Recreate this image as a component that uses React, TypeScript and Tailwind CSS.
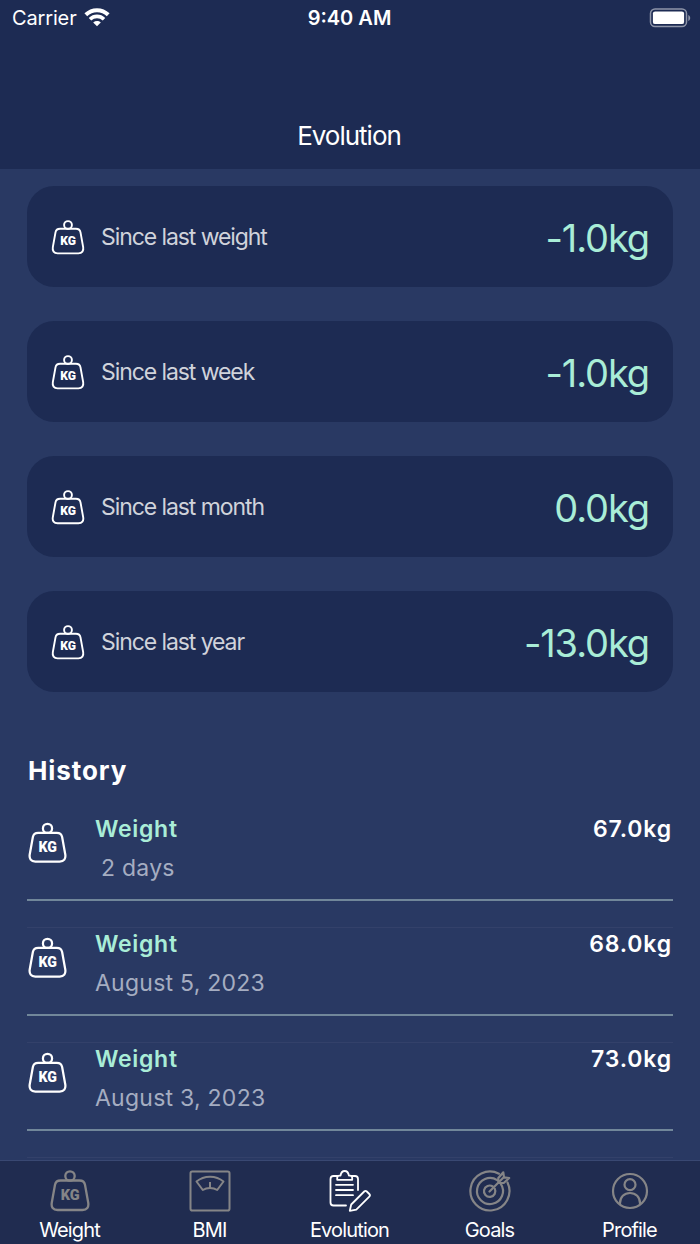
import type { ReactNode } from "react";
import { clsx } from "clsx";

const changes = [
  { label: "Since last weight", value: "-1.0kg" },
  { label: "Since last week", value: "-1.0kg" },
  { label: "Since last month", value: "0.0kg" },
  { label: "Since last year", value: "-13.0kg" },
];

const history = [
  { value: "67.0kg", date: "2 days", recent: true },
  { value: "68.0kg", date: "August 5, 2023" },
  { value: "73.0kg", date: "August 3, 2023" },
];

function WeightIcon({ className }: { className?: string }) {
  return (
    <svg viewBox="0 0 40 42" fill="none" stroke="currentColor" strokeWidth="2.3" className={className} aria-hidden="true">
      <circle cx="20" cy="6" r="4.7" />
      <path d="M10.5 10.5h19c3.2 0 5 1.5 5.5 4.3l3.2 17.7c.8 4.7-1.3 7.5-5.7 7.5h-25c-4.4 0-6.5-2.8-5.700-7.500L5 14.800c.5-2.800 2.300-4.300 5.500-4.300Z" />
      <text
        x="10.7"
        y="29.8"
        stroke="none"
        fill="currentColor"
        className="font-['Roboto'] text-[14.5px] font-black"
        textLength="19"
        lengthAdjust="spacing"
      >
        KG
      </text>
    </svg>
  );
}

function ScaleIcon() {
  return (
    <svg viewBox="0 0 42 42" fill="none" stroke="currentColor" strokeWidth="2" strokeLinejoin="round" className="size-[42px]">
      <rect x="1.5" y="1.5" width="39" height="39" rx="1.8" />
      <path d="M7.5 11.5c7.5-6.5 19.5-6.500 27 0l-6.300 8.500c-4.200-2.700-10.200-2.700-14.400 0Z" />
      <path d="M21 18v-6" />
    </svg>
  );
}

function ClipboardIcon() {
  return (
    <svg viewBox="0 0 42 42" fill="none" stroke="currentColor" strokeWidth="1.8" strokeLinejoin="round" strokeLinecap="round" className="size-[42px]">
      <path d="M8.500 6H4.500c-2 0-3 1-3 3v23.500c0 2 1 3 3 3H17" />
      <path d="M22.500 6h3.500c2 0 3 1 3 3v11" />
      <path d="M8.200 9.800V8c0-1.500.8-2.300 2.300-2.300h1c.5-3 2.100-4.700 4.200-4.700s3.700 1.700 4.200 4.700h1c1.500 0 2.300.8 2.300 2.300v1.800Z" />
      <path d="M7 14.800h17M7 20h17M7 25.200h17" />
      <path d="m20.800 40.800 1.400-6.300 13-13c.8-.8 1.800-.8 2.600 0l2.500 2.500c.8.800.8 1.800 0 2.600l-13 13Z" />
    </svg>
  );
}

function TargetIcon() {
  return (
    <svg viewBox="0 0 42 42" fill="none" stroke="currentColor" strokeWidth="2.2" strokeLinejoin="round" strokeLinecap="round" className="size-[42px]">
      <path d="M30 3.700A19.500 19.500 0 1 0 38.500 12.500" />
      <path d="M28.200 10.200A13 13 0 1 0 31.800 13.800" />
      <path d="M23.800 16.500A5.700 5.700 0 1 0 25.700 18.600" />
      <path d="M20.500 21.500 34 8M29.300 12.700V8l5-5.700.7 5 5.200.7-5.500 5h-5.400" />
    </svg>
  );
}

function ProfileIcon() {
  return (
    <svg viewBox="0 0 42 42" fill="none" stroke="currentColor" strokeWidth="2.2" className="size-[42px]">
      <circle cx="21" cy="21" r="17" />
      <circle cx="21" cy="14.7" r="5.5" />
      <path d="M11 34.700v-1.500c0-6 4.200-10.200 10-10.200s10 4.200 10 10.200v1.500" />
    </svg>
  );
}

function StatusBar() {
  return (
    <div className="grid h-9 grid-cols-3 items-center pl-3 pr-[9px] text-[20px] leading-none">
      <div className="flex items-center gap-[7px]">
        <span className="tracking-[-0.15px]">Carrier</span>
        <svg viewBox="0 0 26 20" className="-mt-[2px] h-5 w-[26px]" fill="none" stroke="currentColor" strokeWidth="4">
          <path d="M1.800 7.700c6.300-6.100 16.100-6.100 22.400 0" />
          <path d="M6 12.200c4-3.800 10-3.800 14 0" strokeWidth="3.6" />
          <path d="m13 19.200-3.800-3.700c2.300-1.900 5.300-1.900 7.600 0Z" fill="currentColor" stroke="none" />
        </svg>
      </div>
      <span className="-ml-[4px] text-center font-semibold">9:40 AM</span>
      <svg viewBox="0 0 42 20" className="-mt-px h-5 w-[42px] justify-self-end" fill="none">
        <rect x="1.5" y="1" width="36" height="17.5" rx="4.5" stroke="#8e95a9" strokeWidth="1.5" />
        <rect x="3.9" y="3.4" width="31.2" height="12.7" rx="2.2" fill="white" />
        <path d="M39.300 7c2.500 1 2.500 5 0 6Z" fill="#8e95a9" />
      </svg>
    </div>
  );
}

function ChangeCard({ label, value }: { label: string; value: string }) {
  return (
    <article className="flex h-[101px] items-center rounded-[27px] bg-[#1d2b53] px-6">
      <WeightIcon className="mt-px h-[35px] w-[34px] shrink-0" />
      <span className="ml-[16px] flex-1 pt-[2px] text-[23px] tracking-[-1.08px] text-[#d0d3db]">{label}</span>
      <span className="pt-[2px] text-[38px] leading-none tracking-[-1.1px] text-[#a9edd7]">{value}</span>
    </article>
  );
}

function HistoryRow({ value, date, recent }: { value: string; date: string; recent?: boolean }) {
  return (
    <li className="h-[115px]">
      <div className="flex h-[88px] border-b-2 border-[#71879a]">
        <WeightIcon className="mt-[9px] ml-px h-[42px] w-[39px] shrink-0" />
        <div className="ml-[28px] flex-1">
          <p className="text-[23px] leading-8 font-semibold tracking-[0.7px] text-[#a9edd7]">Weight</p>
          <p className={clsx("mt-[7px] text-[23px] leading-8 tracking-[0.25px] text-[#a5adc1]", recent && "pl-[6px]")}>{date}</p>
        </div>
        <span className="pr-px text-[23px] leading-8 font-semibold tracking-[0.85px]">{value}</span>
      </div>
      <div className="h-[27px] border-b border-[#33416a]" />
    </li>
  );
}

function Tab({ label, active, children }: { label: string; active?: boolean; children: ReactNode }) {
  return (
    <button className="-ml-px flex flex-col items-center">
      <span className={clsx("flex h-[42px] items-end", active ? "text-white" : "text-[#858587]")}>{children}</span>
      <span className="mt-[5px] text-[20px] leading-[26px] tracking-[-0.85px]">{label}</span>
    </button>
  );
}

export default function App() {
  return (
    <div className="flex h-[1244px] w-[700px] flex-col overflow-hidden bg-[#293963] font-['Inter',sans-serif] text-white">
      <header className="h-[169px] shrink-0 bg-[#1d2b53]">
        <StatusBar />
        <h1 className="-ml-[2px] pt-[84px] text-center text-[26px] leading-8 tracking-[-1px]">Evolution</h1>
      </header>

      <main className="min-h-0 flex-1 overflow-hidden px-[27px] pt-[17px]">
        <section className="flex flex-col gap-[34px]">
          {changes.map((c) => (
            <ChangeCard key={c.label} {...c} />
          ))}
        </section>

        <h2 className="mt-[63px] pl-px text-[26px] leading-8 font-bold tracking-[0.9px]">History</h2>
        <ul className="mt-[26px]">
          {history.map((h) => (
            <HistoryRow key={h.date} {...h} />
          ))}
        </ul>
      </main>

      <nav className="grid h-[84px] shrink-0 grid-cols-5 border-t border-[#394872] bg-[#202c50] pt-[9px]">
        <Tab label="Weight">
          <WeightIcon className="h-[42px] w-10" />
        </Tab>
        <Tab label="BMI">
          <ScaleIcon />
        </Tab>
        <Tab label="Evolution" active>
          <ClipboardIcon />
        </Tab>
        <Tab label="Goals">
          <TargetIcon />
        </Tab>
        <Tab label="Profile">
          <ProfileIcon />
        </Tab>
      </nav>
    </div>
  );
}
